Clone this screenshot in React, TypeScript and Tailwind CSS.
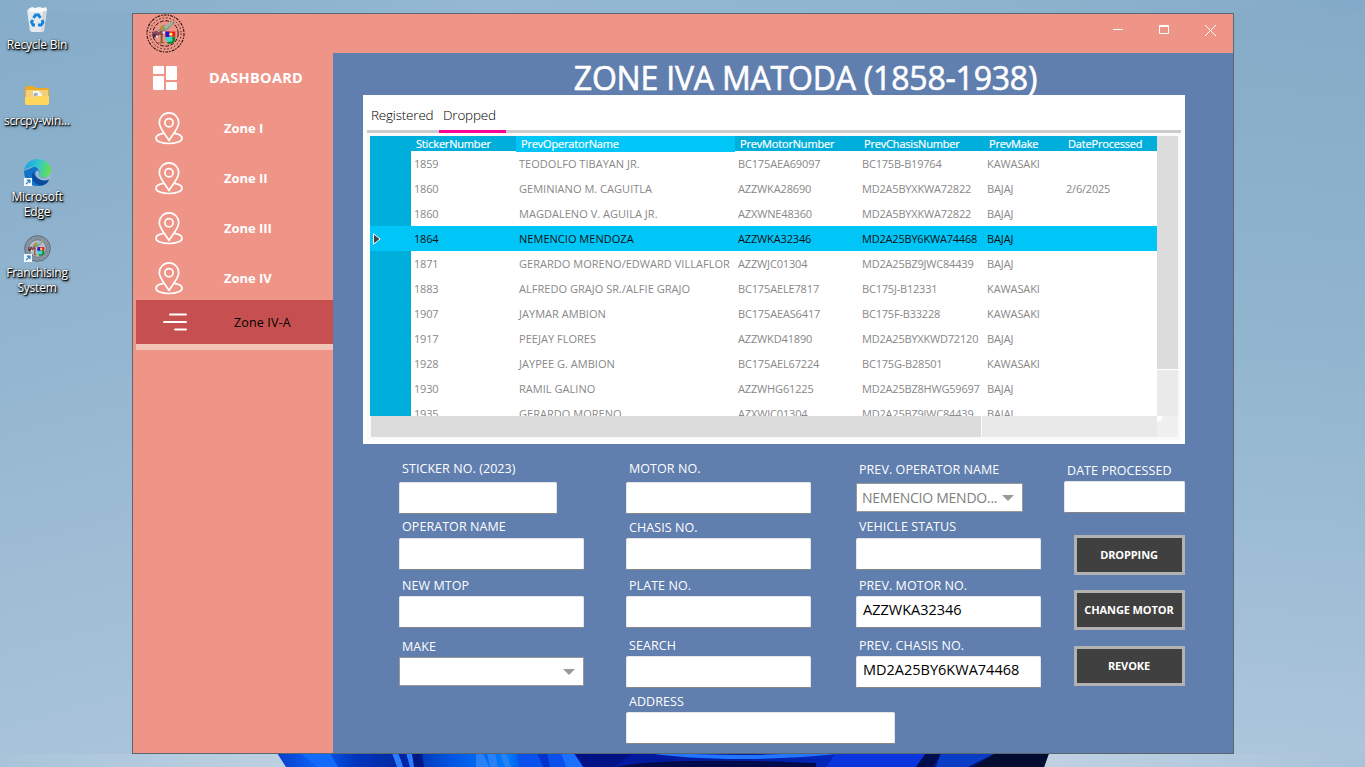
import React from 'react';

type RowData = [string, string, string, string, string, string];

const rows: RowData[] = [
  ['1859', 'TEODOLFO TIBAYAN JR.', 'BC175AEA69097', 'BC175B-B19764', 'KAWASAKI', ''],
  ['1860', 'GEMINIANO M. CAGUITLA', 'AZZWKA28690', 'MD2A5BYXKWA72822', 'BAJAJ', '2/6/2025'],
  ['1860', 'MAGDALENO V. AGUILA JR.', 'AZXWNE48360', 'MD2A5BYXKWA72822', 'BAJAJ', ''],
  ['1864', 'NEMENCIO MENDOZA', 'AZZWKA32346', 'MD2A25BY6KWA74468', 'BAJAJ', ''],
  ['1871', 'GERARDO MORENO/EDWARD VILLAFLOR', 'AZZWJC01304', 'MD2A25BZ9JWC84439', 'BAJAJ', ''],
  ['1883', 'ALFREDO GRAJO SR./ALFIE GRAJO', 'BC175AELE7817', 'BC175J-B12331', 'KAWASAKI', ''],
  ['1907', 'JAYMAR AMBION', 'BC175AEAS6417', 'BC175F-B33228', 'KAWASAKI', ''],
  ['1917', 'PEEJAY FLORES', 'AZZWKD41890', 'MD2A25BYXKWD72120', 'BAJAJ', ''],
  ['1928', 'JAYPEE G. AMBION', 'BC175AEL67224', 'BC175G-B28501', 'KAWASAKI', ''],
  ['1930', 'RAMIL GALINO', 'AZZWHG61225', 'MD2A25BZ8HWG59697', 'BAJAJ', ''],
  ['1935', 'GERARDO MORENO', 'AZXWJC01304', 'MD2A25BZ9JWC84439', 'BAJAJ', ''],
];

const headers = ['StickerNumber', 'PrevOperatorName', 'PrevMotorNumber', 'PrevChasisNumber', 'PrevMake', 'DateProcessed'];
const gridCols = 'grid grid-cols-[41px_105px_219px_124px_125px_79px_94px]';
const cellTracking = [
  'tracking-[-0.2px]',
  'tracking-[0.03px]',
  'tracking-[-0.15px]',
  'tracking-[-0.2px]',
  'tracking-[-0.1px]',
  'tracking-[-0.2px]',
];

function Seal({ className, faded }: { className: string; faded?: boolean }) {
  const ink = faded ? '#4d5a66' : '#1c1010';
  return (
    <svg viewBox="0 0 40 40" className={className}>
      {faded && <circle cx="20" cy="20" r="19.5" fill="#8d9ba8" />}
      <circle cx="20" cy="20" r="19" fill="none" stroke={ink} strokeWidth="1.1" strokeDasharray={faded ? undefined : '3 1.2 1.5 1'} />
      <circle cx="20" cy="20" r="16" fill="none" stroke={ink} strokeWidth="1" strokeDasharray="1.4 2.2" />
      <circle cx="20" cy="20" r="13" fill={faded ? '#b4bec6' : 'none'} stroke={ink} strokeWidth="1" strokeDasharray={faded ? undefined : '4 1.5'} />
      <path d="M12 17l6-6 4 1 6-5 1 2-6 6-4 3z" fill="#6f9a86" />
      <path d="M18 13l8-5 2-1-1 3-7 6z" fill="#9fb7a0" />
      <path d="M6 19l5-2 2 2 2-2 4 1-2 4-3-1-3 3-5-2z" fill="#8a4a5c" />
      <path d="M7 21h4v3H7z" fill="#3c2a35" />
      <path d="M15 12h3v5h-3z" fill="#c68a2a" />
      <path d="M10 22h2v2h-2zM17 18h2v2h-2z" fill="#fff" />
      <path d="M15 20h2v9h2v1h-6v-1h2z" fill="#8b5a33" />
      <path d="M20 18h10v5H20z" fill="#f01414" />
      <path d="M20 18h4v6h-4z" fill="#1a1ad8" />
      <path d="M20 23.500h7V29h-4l-3-2z" fill="#38d8d0" />
      <path d="M27 23h3v4l-2 3-5 1-2-2 6-1z" fill="#0f8a2c" />
      <circle cx="25.5" cy="20.700" r="1.7" fill="#ffe96b" />
    </svg>
  );
}

function PinIcon() {
  return (
    <svg viewBox="0 0 28 33" className="h-[33px] w-7" fill="none" stroke="#fff" strokeWidth="1.7" strokeLinejoin="round">
      <path d="M14 28.5C12 24.500 4.300 16.500 4.300 10.700A9.700 9.800 0 0 1 23.700 10.700C23.700 16.500 16 24.500 14 28.500Z" />
      <circle cx="14" cy="10.800" r="4.100" />
      <path d="M7.800 21.600C3.500 22.300 1 23.900 1 26.200c0 3.200 5.800 5.300 13 5.300s13-2.100 13-5.300c0-2.300-2.500-3.900-6.800-4.600" strokeLinecap="round" />
    </svg>
  );
}

function ShortcutArrow() {
  return (
    <svg viewBox="0 0 8 8" className="absolute bottom-0 left-0 size-2">
      <path d="M0 0h8v8H0z" fill="#f6fafd" />
      <path d="M2 6.200l3-3M2.800 2.200h3.100v3.100" fill="none" stroke="#1676c9" strokeWidth="1.200" />
    </svg>
  );
}

function DesktopIcon({ children, label, className }: { children: React.ReactNode; label: string[]; className: string }) {
  return (
    <div className={`flex w-[74px] flex-col items-center ${className}`}>
      {children}
      <div className="text-center text-[12px] leading-[15px] tracking-[-0.2px] whitespace-nowrap text-white [text-shadow:1px_1px_1px_#000,1px_1px_3px_#000,0_1px_2px_rgba(0,0,0,0.7)]">
        {label.map((l) => (
          <div key={l}>{l}</div>
        ))}
      </div>
    </div>
  );
}

type FieldProps = { label: string; value?: string; className?: string; labelClass?: string; box?: string };

function FieldLabel({ children, className }: { children: string; className: string }) {
  return (
    <div className={`ml-[3px] text-[12.5px] leading-[18px] tracking-[0.07px] whitespace-nowrap text-white ${className}`}>
      {children}
    </div>
  );
}

function Field({ label, value = '', className = '', labelClass = 'mb-px', box = 'w-[185px]' }: FieldProps) {
  return (
    <div className={className}>
      <FieldLabel className={labelClass}>{label}</FieldLabel>
      <div className={`h-8 rounded-[2px] border border-x-[#e6e6e6] border-t-[#e6e6e6] border-b-[#858585] bg-white pl-1.5 text-[14.5px] leading-[26px] text-black ${box}`}>
        {value}
      </div>
    </div>
  );
}

function Combo({ label, value = '', className = '', labelClass = 'mb-px', box = 'w-[185px]' }: FieldProps) {
  return (
    <div className={className}>
      <FieldLabel className={labelClass}>{label}</FieldLabel>
      <div className={`flex h-[29px] items-center justify-between border border-[#999] bg-white pr-2 pl-[5px] text-[14px] tracking-[-0.25px] text-[#808080] ${box}`}>
        <span className="whitespace-nowrap">{value}</span>
        <svg viewBox="0 0 12 6" className="h-1.5 w-3 shrink-0">
          <path d="M0 0h12L6 6z" fill="#999" />
        </svg>
      </div>
    </div>
  );
}

function ActionButton({ children, className }: { children: string; className: string }) {
  return (
    <button className={`ml-2.5 flex h-10 w-[111px] items-center justify-center border-[3px] border-[#b2b2b2] bg-[#404040] pr-px text-[11px] font-bold tracking-[-0.1px] whitespace-nowrap text-white ${className}`}>
      {children}
    </button>
  );
}

function Wallpaper() {
  return (
    <svg viewBox="0 0 775 14" className="absolute top-[753px] left-[276px] h-3.5 w-[775px]" preserveAspectRatio="none">
      <defs>
        <linearGradient id="bloom" x1="0" x2="1" y1="0" y2="0">
          <stop offset="0" stopColor="#0a3ecb" />
          <stop offset="0.05" stopColor="#0b62f5" />
          <stop offset="0.1" stopColor="#0036c0" />
          <stop offset="0.16" stopColor="#0029a0" />
          <stop offset="0.23" stopColor="#0058e6" />
          <stop offset="0.3" stopColor="#007cff" />
          <stop offset="0.33" stopColor="#0038d2" />
          <stop offset="0.45" stopColor="#0019a0" />
          <stop offset="0.6" stopColor="#001d9c" />
          <stop offset="0.75" stopColor="#002ac2" />
          <stop offset="0.85" stopColor="#001a86" />
          <stop offset="1" stopColor="#000a24" />
        </linearGradient>
      </defs>
      <path d="M1 0h772l-5 14H10z" fill="url(#bloom)" />
      <path d="M24 0h30l8 14H42z" fill="#126bff" />
      <path d="M116 0h7l4 14h-6zM130 0h6l3 14h-6z" fill="#2d7dff" />
      <path d="M122 0h8l4 14h-6z" fill="#0023a8" />
      <path d="M136 0h10l2 14h-10z" fill="#001a85" />
      <path d="M200 0h7l6 14h-13zM211 0h8l3 14h-8zM224 0h6l5 14h-6z" fill="#2a80f5" />
      <path d="M241 0h20l6 14h-23zM271 0h14l5 14h-16z" fill="#0a50ed" />
      <path d="M285 0h13l9 14h-17z" fill="#1b70ff" />
      <path d="M298 0h60l-20 14h-30z" fill="#001286" />
      <path d="M370 0c50 7 120 9 200 0l-45 0c-45 3-90 2-135 0z" fill="#2377ff" />
      <path d="M340 14c30-7 100-8 200-4v4z" fill="#000b4c" />
      <path d="M560 0h90l-10 14h-90z" fill="#0a35df" />
      <path d="M650 0h15l-8 14h-17z" fill="#000e50" />
      <path d="M665 0h55l-28 14h-32z" fill="#0a3dc5" />
      <path d="M720 0h53l-5 14h-70z" fill="#020c30" />
    </svg>
  );
}

export default function App() {
  return (
    <div className="relative h-[767px] w-[1365px] overflow-hidden bg-[linear-gradient(165deg,#85acc9_0%,#8bb0cc_15%,#9bbad3_45%,#acc6db_75%,#b9cde0_100%)] font-['Open_Sans','Noto_Sans',sans-serif]">
      <div className="absolute inset-y-0 right-0 w-[131px] bg-[linear-gradient(185deg,#85abc8_0%,#90b4ce_40%,#9dbcd5_70%,#adc6dc_100%)]" />
      <div className="absolute inset-x-0 top-0 h-[13px] bg-[linear-gradient(90deg,#86adca_0%,#94b8d2_35%,#90b5d0_65%,#83aac8_100%)]" />
      <div className="absolute inset-x-0 bottom-0 h-[13px] bg-[linear-gradient(90deg,#a9c4da_0%,#bed0e2_22%,#bed0e2_78%,#a9c3da_100%)]" />
      <Wallpaper />

      <div className="absolute top-0 left-0 flex w-[74px] flex-col">
        <DesktopIcon label={['Recycle Bin']} className="h-[76px] pt-[7px]">
          <svg viewBox="0 0 22 26" className="mb-1 h-[26px] w-[22px]">
            <path d="M1 3l20-1-3 22-2 1H6l-2-1z" fill="#e6eaee" />
            <path d="M2 2l4-2 3 1 4-1 4 1 3-1 1 3-4 2H5z" fill="#f8f9fa" />
            <path d="M17 4h3l-3 20h-2z" fill="#cfd5da" />
            <path d="M7.500 11l2-3h3l2 3M16 13l1 2.500-2 2.500h-3M9 18H7l-1.500-3 1.500-2" fill="none" stroke="#1583dc" strokeWidth="2.800" />
          </svg>
        </DesktopIcon>
        <DesktopIcon label={['scrcpy-win...']} className="h-[76px] pt-[10px]">
          <svg viewBox="0 0 24 20" className="mb-[7px] h-5 w-6">
            <path d="M0 2q0-2 2-2h6l3 2h11q2 0 2 2v14H0z" fill="#eda922" />
            <path d="M1 4h22v12H1z" fill="#f3cf7c" />
            <path d="M8 5h6l3 3v6H8z" fill="#f2f3f3" />
            <path d="M10 11a2.200 2.200 0 1 1 3-2l-2 1z" fill="#a3acb5" />
            <path d="M0 11l9 0 3-1h12v7q0 2-2 2H2q-2 0-2-2z" fill="#ffd75c" />
          </svg>
        </DesktopIcon>
        <DesktopIcon label={['Microsoft', 'Edge']} className="h-[76px] pt-[7px]">
          <div className="relative mb-[3px] size-[27px]">
            <svg viewBox="0 0 27 27" className="size-[27px]">
              <defs>
                <linearGradient id="edgeTop" x1="0" x2="1" y1="0.3" y2="0.5">
                  <stop offset="0" stopColor="#1a9fe0" />
                  <stop offset="0.5" stopColor="#31c8d0" />
                  <stop offset="1" stopColor="#66e04d" />
                </linearGradient>
              </defs>
              <path d="M0 12C0 20 5 27 14 27c5 0 9-2 11-6.500L18 16 12 7z" fill="#1272c8" />
              <path d="M0 12C1 5 6 0 13.500 0 21 0 27 5 27 11c0 5-4 7.500-7.500 7.500-3 0-5-1-4-2.500 2-3 0-8-5-8C5 8 1 10 0 12z" fill="url(#edgeTop)" />
              <path d="M9.500 12c-4 7 1 14 8 14.500 4-.5 6.500-3 7.500-6-3 1.500-8 1-11-1.500-3-2-5-4-4.500-7z" fill="#0b4a9a" />
              <path d="M15.500 16c-1 1.500 1 2.500 4 2.500 3.500 0 6-2 7-4l.5 5-2 1c-4 2-9 1-12-2-2-2-2.500-5 0-7 2 0 3.500 2.500 2.500 4.500z" fill="#98b8d1" />
            </svg>
            <ShortcutArrow />
          </div>
        </DesktopIcon>
        <DesktopIcon label={['Franchising', 'System']} className="pt-[7px]">
          <div className="relative mb-[3px] size-[27px]">
            <Seal faded className="size-[27px]" />
            <ShortcutArrow />
          </div>
        </DesktopIcon>
      </div>

      <div className="absolute top-[13px] left-[132px] flex h-[741px] w-[1102px] flex-col border border-[#5b676e] bg-[#607eae]">
        <header className="flex h-[39px] shrink-0 justify-between bg-[#ef9587] pl-[13px]">
          <Seal className="size-[39px]" />
          <div className="flex h-8 items-center gap-9 pr-[17px]">
            <svg viewBox="0 0 10 11" className="h-[11px] w-2.5"><path d="M0 4.500h10" stroke="#fff" /></svg>
            <svg viewBox="0 0 10 11" className="h-[11px] w-2.5"><path d="M.5 .5h9v8h-9zM0 1.500h10" fill="none" stroke="#fff" /></svg>
            <svg viewBox="0 0 11 11" className="h-[11px] w-[11px]"><path d="M0 0l11 11M11 0L0 11" stroke="#fff" /></svg>
          </div>
        </header>

        <div className="flex min-h-0 flex-1">
          <nav className="w-[200px] shrink-0 bg-[#ef9587] text-white">
            <div className="flex h-[50px] items-center pl-5 text-[14.5px] font-bold tracking-[0.3px]">
              <svg viewBox="0 0 24 24" className="mr-8 size-6" fill="#fff">
                <rect width="11" height="8" rx="1" />
                <rect y="10" width="11" height="14" rx="1" />
                <rect x="13" width="11" height="14" rx="1" />
                <rect x="13" y="16" width="11" height="8" rx="1" />
              </svg>
              DASHBOARD
            </div>
            {['Zone I', 'Zone II', 'Zone III', 'Zone IV'].map((z) => (
              <div key={z} className="flex h-[50px] items-center gap-10 pl-[22px] text-[13px] font-bold tracking-[-0.05px]">
                <PinIcon />
                <span className="ml-px pt-0.5">{z}</span>
              </div>
            ))}
            <div className="-mt-[3px] ml-[3px] flex h-[50px] items-center border-b-[6px] border-[#f2c4b5] bg-[#c65050] pl-[27px] text-[12.5px] tracking-[0.15px] text-black">
              <svg viewBox="0 0 24 18" className="mr-[47px] h-[18px] w-6" stroke="#fff" strokeWidth="2" strokeLinecap="round">
                <path d="M7 1.500h16M1 9h22M12 16.500h11" />
              </svg>
              <span className="pt-0.5">Zone IV-A</span>
            </div>
          </nav>

          <main className="flex-1 pl-[30px]">
            <h1 className="h-[42px] w-[885px] text-center text-[32px] leading-[50px] tracking-[-0.2px] whitespace-nowrap text-white [-webkit-text-stroke:0.6px_#fff]">
              ZONE IVA MATODA (1858-1938)
            </h1>

            <section className="h-[349px] w-[822px] bg-[#fefefe] px-1 text-black">
              <div className="flex h-[38px] border-b-[3px] border-[#ccc] text-[13.5px] leading-[40px] font-light tracking-[-0.2px]">
                <div className="w-[72px] pl-1">Registered</div>
                <div className="h-[38px] w-[67px] border-b-[3px] border-[#ff0097] pl-1">Dropped</div>
              </div>
              <div className="h-[307px] bg-[#fafafa] px-[3px] pt-[3px]">
                <div className="flex h-[280px] bg-white">
                  <div className="w-[787px] overflow-hidden bg-[linear-gradient(90deg,#00aedb_41px,#fff_41px)]">
                    <div className={`${gridCols} h-[15px] bg-[#00aedb] text-[11px] leading-4 tracking-[-0.18px] text-white [-webkit-text-stroke:0.2px_#fff]`}>
                      <span />
                      {headers.map((h, i) => (
                        <span key={h} className={i === 1 ? 'bg-[#00c6f7] pl-[5px]' : 'pl-[5px]'}>{h}</span>
                      ))}
                    </div>
                    {rows.map((r, i) => (
                      <div
                        key={i}
                        className={`${gridCols} h-[25px] text-[11px] leading-[26px] whitespace-nowrap ${i === 3 ? 'bg-[#00c6f7] text-[#111]' : 'text-[#888]'}`}
                      >
                        <span className="flex items-center pl-[3px]">
                          {i === 3 && (
                            <svg viewBox="0 0 8 12" className="h-3 w-2">
                              <path d="M.5.8v10.400L7.200 6z" fill="#444" stroke="#fff" />
                            </svg>
                          )}
                        </span>
                        {r.map((c, j) => (
                          <span key={j} className={`pl-[3px] ${cellTracking[j]}`}>{c}</span>
                        ))}
                      </div>
                    ))}
                  </div>
                  <div className="flex w-[21px] flex-col gap-px">
                    <div className="h-[233px] bg-[#dcdcdc]" />
                    <div className="flex-1 bg-[#eaeaea]" />
                  </div>
                </div>
                <div className="flex h-[21px] pl-px">
                  <div className="mr-px w-[610px] bg-[#dcdcdc]" />
                  <div className="w-[175px] bg-[#e9e9e9]" />
                  <div className="w-[21px] bg-[#f0f0f0]">
                    <div className="size-[5px] rounded-br-[2px] bg-white" />
                  </div>
                </div>
              </div>
            </section>

            <section className="flex pl-9">
              <div className="w-[227px] pt-4">
                <Field label="STICKER NO. (2023)" labelClass="mb-1" box="w-[158px]" />
                <Field label="OPERATOR NAME" className="mt-1" labelClass="mb-0.5" />
                <Field label="NEW MTOP" className="mt-[7px]" />
                <Combo label="MAKE" className="mt-2.5" />
              </div>
              <div className="w-[230px] pt-4">
                <Field label="MOTOR NO." labelClass="mb-1" />
                <Field label="CHASIS NO." className="mt-[5px]" />
                <Field label="PLATE NO." className="mt-[7px]" />
                <Field label="SEARCH" className="mt-[9px]" />
                <Field label="ADDRESS" className="mt-[5px]" box="w-[269px]" />
              </div>
              <div className="w-[208px] pt-[17px]">
                <Combo label="PREV. OPERATOR NAME" value="NEMENCIO MENDO..." labelClass="mb-1" box="w-[167px]" />
                <Field label="VEHICLE STATUS" className="mt-1.5" labelClass="mb-0.5" />
                <Field label="PREV. MOTOR NO." value="AZZWKA32346" className="mt-[7px]" />
                <Field label="PREV. CHASIS NO." value="MD2A25BY6KWA74468" className="mt-[9px]" />
              </div>
              <div className="pt-[18px]">
                <Field label="DATE PROCESSED" box="w-[121px]" />
                <ActionButton className="mt-[22px]">DROPPING</ActionButton>
                <ActionButton className="mt-[15px]">CHANGE MOTOR</ActionButton>
                <ActionButton className="mt-4">REVOKE</ActionButton>
              </div>
            </section>
          </main>
        </div>
      </div>
    </div>
  );
}
